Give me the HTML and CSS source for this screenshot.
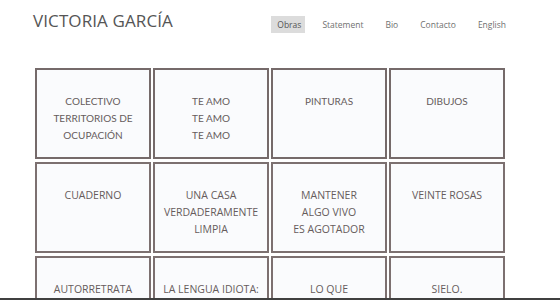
FILE: index.html
```html
<!DOCTYPE html>
<html lang="es">
<head>
<meta charset="utf-8">
<title>Victoria García</title>
<link rel="stylesheet" href="styles.css">
</head>
<body>
<div class="page">
  <header class="header">
    <div class="title">VICTORIA GARCÍA</div>
    <nav class="nav">
      <a class="nav-item active">Obras</a>
      <a class="nav-item">Statement</a>
      <a class="nav-item">Bio</a>
      <a class="nav-item">Contacto</a>
      <a class="nav-item">English</a>
    </nav>
  </header>
  <main class="grid">
    <div class="card alt">COLECTIVO<br>TERRITORIOS DE<br>OCUPACIÓN</div>
    <div class="card alt">TE AMO<br>TE AMO<br>TE AMO</div>
    <div class="card alt">PINTURAS</div>
    <div class="card alt">DIBUJOS</div>
    <div class="card">CUADERNO</div>
    <div class="card">UNA CASA<br>VERDADERAMENTE<br>LIMPIA</div>
    <div class="card">MANTENER<br>ALGO VIVO<br>ES AGOTADOR</div>
    <div class="card">VEINTE ROSAS</div>
    <div class="card">AUTORRETRATA</div>
    <div class="card">LA LENGUA IDIOTA:</div>
    <div class="card">LO QUE</div>
    <div class="card">SIELO.</div>
  </main>
</div>
<footer class="footer"></footer>
</body>
</html>
```
FILE: styles.css
```css
html, body {
  margin: 0;
  padding: 0;
  background: #ffffff;
}
body {
  font-family: "Open Sans", "DejaVu Sans", sans-serif;
  height: 300px;
  overflow: hidden;
  position: relative;
}
.page {
  width: 473px;
  margin-left: 33px;
}
.header {
  display: flex;
  justify-content: space-between;
  align-items: flex-start;
  height: 68px;
}
.title {
  margin-top: 9px;
  font-size: 17px;
  color: #555555;
  letter-spacing: 0.1px;
}
.nav {
  display: flex;
  gap: 12px;
  margin-top: 16px;
}
.nav-item {
  font-size: 8.5px;
  line-height: 17px;
  color: #707070;
  padding: 0 5px;
}
.nav-item:last-child {
  padding-right: 0;
}
.nav-item.active {
  background: #dcdcdc;
  color: #555555;
  padding: 0 4px 0 6px;
}
.grid {
  display: grid;
  grid-template-columns: repeat(4, 116px);
  grid-auto-rows: 91px;
  column-gap: 2px;
  row-gap: 3px;
  margin-left: 2px;
}
.card {
  box-sizing: border-box;
  border: 2px solid #7c7070;
  background: #fafbfd;
  text-align: center;
  font-size: 10.5px;
  line-height: 17px;
  color: #665c5c;
  padding-top: 23px;
}
.card.alt {
  font-family: "Lato", "Open Sans", sans-serif;
  font-size: 10px;
  border-color: #756a6a;
}
.footer {
  position: absolute;
  left: 0;
  right: 0;
  top: 298px;
  height: 2px;
  background: #404040;
}
```
